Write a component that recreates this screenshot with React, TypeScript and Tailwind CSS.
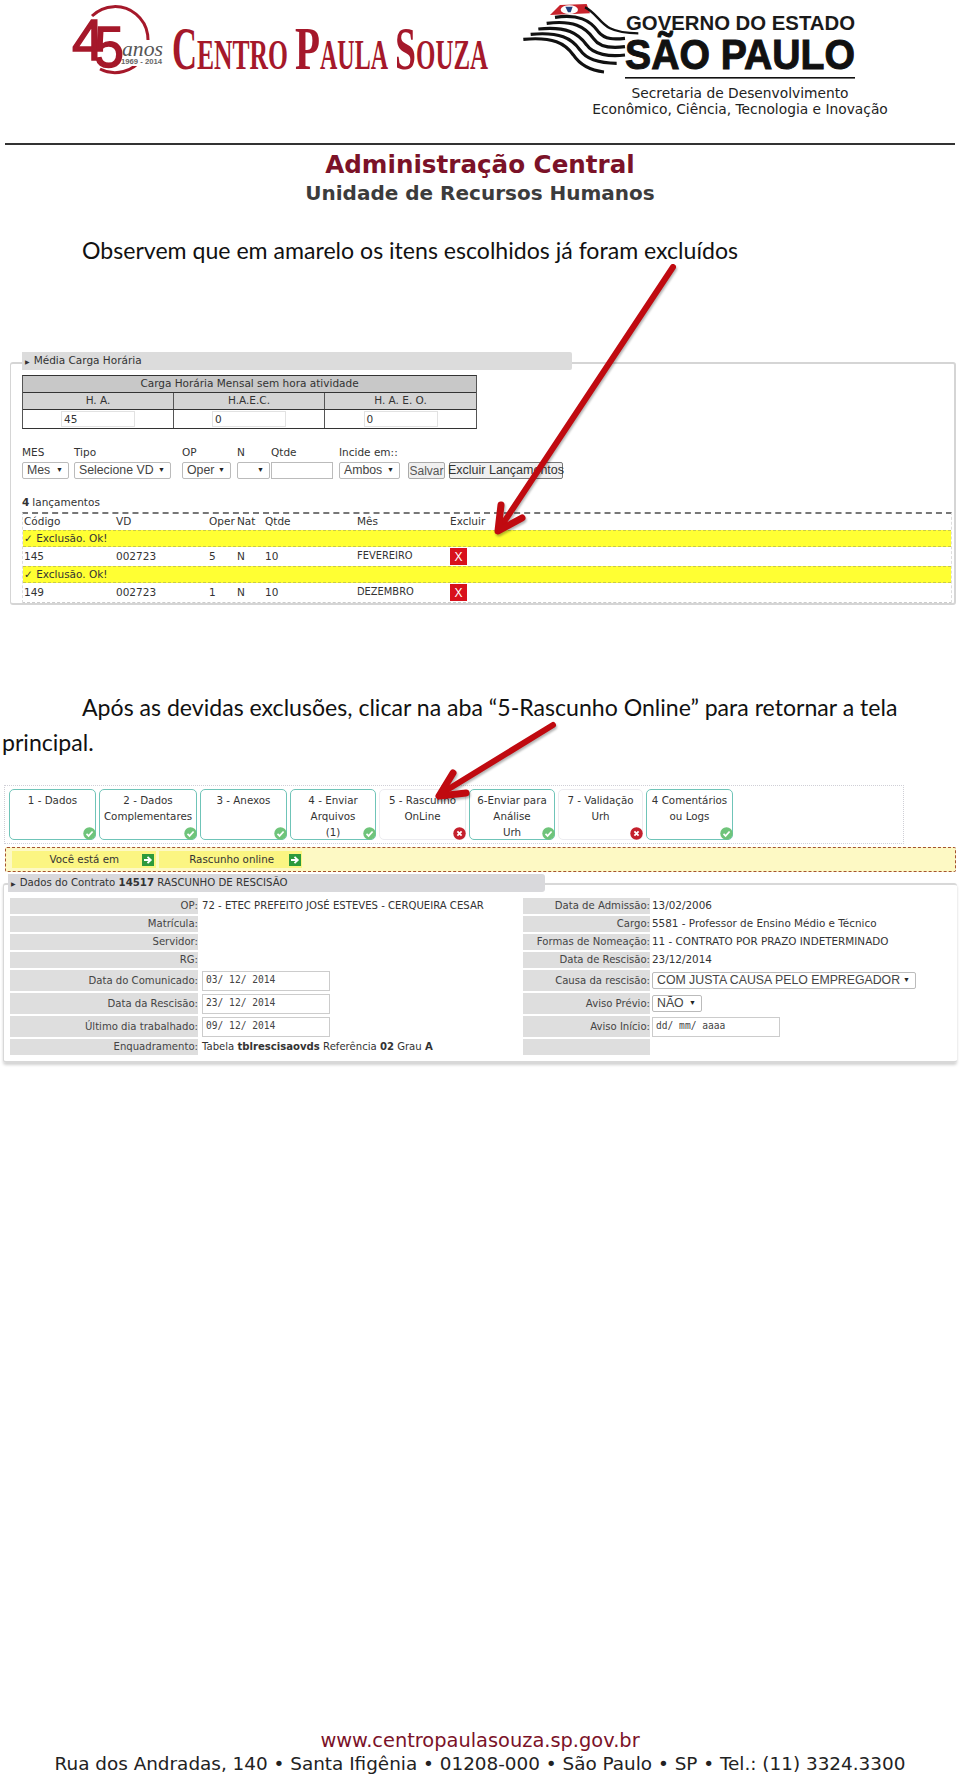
const TABS = [
  { w: "w-[87px]", lines: ["1 - Dados"], ok: true },
  { w: "w-[98px]", lines: ["2 - Dados", "Complementares"], ok: true },
  { w: "w-[87px]", lines: ["3 - Anexos"], ok: true },
  { w: "w-[86px]", lines: ["4 - Enviar", "Arquivos", "(1)"], ok: true },
  { w: "w-[87px]", lines: ["5 - Rascunho", "OnLine"], ok: false },
  { w: "w-[86px]", lines: ["6-Enviar para", "Análise", "Urh"], ok: true },
  { w: "w-[85px]", lines: ["7 - Validação", "Urh"], ok: false },
  { w: "w-[87px]", lines: ["4 Comentários", "ou Logs"], ok: true },
];

function StatusIcon({ ok }: { ok: boolean }) {
  return (
    <svg width="13" height="13" viewBox="0 0 13 13" className="absolute right-[-1px] bottom-[-1px]">
      <circle cx="6.5" cy="6.5" r="6.2" fill={ok ? "#6fc47a" : "#c4202c"} />
      {ok ? (
        <path d="M3.5 6.8l2.1 2.1 4-4.4" fill="none" stroke="#fff" strokeWidth="1.7" />
      ) : (
        <path d="M4.4 4.4l4.2 4.2M8.6 4.4l-4.2 4.2" fill="none" stroke="#fff" strokeWidth="1.8" />
      )}
    </svg>
  );
}

function GreenArrow() {
  return (
    <svg width="12" height="12" viewBox="0 0 12 12" className="shrink-0">
      <rect width="12" height="12" fill="#2c9a3c" />
      <path d="M2 6h6M5.5 2.8L8.8 6 5.5 9.2" fill="none" stroke="#fff" strokeWidth="1.8" />
    </svg>
  );
}

function FakeSelect({ className, label }: { className: string; label: string }) {
  return (
    <div className={`h-[17px] flex items-center justify-between pl-[4px] pr-[5px] bg-white border border-[#bbb] rounded-[2px] font-['Liberation_Sans',sans-serif] text-[12.3px] text-[#444] whitespace-nowrap ${className}`}>
      <span>{label}</span>
      <span className="text-[7px] text-[#222]">▼</span>
    </div>
  );
}

function LancamentoRow({ codigo, oper, mes }: { codigo: string; oper: string; mes: string }) {
  return (
    <>
      <div className="h-[17px] bg-[#ffff33] border-y border-dashed border-[#c9c94a] pl-[1px] flex items-center text-[#333]">✓ Exclusão. Ok!</div>
      <div className="h-[19px] flex items-center">
        <span className="w-[93px] pl-[1px]">{codigo}</span>
        <span className="w-[93px]">002723</span>
        <span className="w-[28px]">{oper}</span>
        <span className="w-[28px]">N</span>
        <span className="w-[92px]">10</span>
        <span className="w-[93px] text-[9.9px]">{mes}</span>
        <span className="w-[17px] h-[17px] bg-[#d8111c] text-white flex items-center justify-center font-['Liberation_Sans',sans-serif] text-[12px]">X</span>
      </div>
    </>
  );
}

function FirstShot() {
  return (
    <section className="mt-[87px] ml-[10px] w-[946px] h-[255px] font-['DejaVu_Sans',sans-serif] text-[10.5px] text-[#333]">
      <div className="relative z-10 ml-[12px] w-[550px] h-[18px] bg-[#dcdcdc] rounded-r-[2px] flex items-center gap-[4px] pl-[3px]">
        <span className="text-[6px]">▶</span>Média Carga Horária
      </div>
      <div className="-mt-[8px] h-[243px] bg-white border-t-2 border-r-2 border-b-2 border-l border-[#d5d5d5] rounded-[3px] pl-[11px] pt-[11px]">
        <div className="w-[455px] border-y border-[#333] border-x border-x-[#555] text-center text-[#333]">
          <div className="h-[17px] bg-[#c8c8c8] border-b border-[#333] flex items-center justify-center">Carga Horária Mensal sem hora atividade</div>
          <div className="h-[17px] grid grid-cols-3 bg-[#d4d4d4] border-b border-[#333]">
            <div className="flex items-center justify-center border-r border-[#555]">H. A.</div>
            <div className="flex items-center justify-center border-r border-[#555]">H.A.E.C.</div>
            <div className="flex items-center justify-center">H. A. E. O.</div>
          </div>
          <div className="h-[18px] grid grid-cols-3 text-left">
            {["45", "0", "0"].map((v, i) => (
              <div key={i} className={`flex items-center justify-center ${i < 2 ? "border-r border-[#555]" : ""}`}>
                <div className="w-[74px] h-[16px] border border-[#e2e2e2] pl-[2px] leading-[15px]">{v}</div>
              </div>
            ))}
          </div>
        </div>

        <div className="mt-[17px] flex h-[14px] items-center">
          <span className="w-[52px]">MES</span>
          <span className="w-[108px]">Tipo</span>
          <span className="w-[55px]">OP</span>
          <span className="w-[34px]">N</span>
          <span className="w-[68px]">Qtde</span>
          <span>Incide em::</span>
        </div>
        <div className="mt-[2px] flex">
          <FakeSelect className="w-[47px]" label="Mes" />
          <FakeSelect className="w-[97px] ml-[5px]" label="Selecione VD" />
          <FakeSelect className="w-[49px] ml-[11px]" label="Oper" />
          <FakeSelect className="w-[33px] ml-[6px]" label="" />
          <div className="w-[62px] h-[17px] ml-[1px] bg-white border border-[#bbb]" />
          <FakeSelect className="w-[61px] ml-[6px]" label="Ambos" />
          <div className="w-[37px] h-[17px] ml-[8px] bg-[#f0f0f0] border border-[#aaa] rounded-[2px] flex items-center justify-center font-['Liberation_Sans',sans-serif] text-[12px] text-[#555]">Salvar</div>
          <div className="w-[114px] h-[17px] ml-[4px] bg-[#f0f0f0] border border-[#777] rounded-[2px] flex items-center justify-center font-['Liberation_Sans',sans-serif] text-[12.5px] text-[#333] whitespace-nowrap">Excluir Lançamentos</div>
        </div>

        <div className="mt-[16px] h-[16px] flex items-center"><b className="mr-[3px]">4</b>lançamentos</div>
        <div className="mt-[1px] w-[930px] h-[91px] border-t-2 border-dashed border-[#777] border-x border-x-[#ddd] border-b border-b-[#ccc]">
          <div className="h-[16px] flex items-center">
            <span className="w-[93px] pl-[1px]">Código</span>
            <span className="w-[93px]">VD</span>
            <span className="w-[28px]">Oper</span>
            <span className="w-[28px]">Nat</span>
            <span className="w-[92px]">Qtde</span>
            <span className="w-[93px]">Mês</span>
            <span>Excluir</span>
          </div>
          <LancamentoRow codigo="145" oper="5" mes="FEVEREIRO" />
          <LancamentoRow codigo="149" oper="1" mes="DEZEMBRO" />
        </div>
      </div>
    </section>
  );
}

const TOP_ROWS = [
  ["OP:", "72 - ETEC PREFEITO JOSÉ ESTEVES - CERQUEIRA CESAR", "Data de Admissão:", "13/02/2006"],
  ["Matrícula:", "", "Cargo:", "5581 - Professor de Ensino Médio e Técnico"],
  ["Servidor:", "", "Formas de Nomeação:", "11 - CONTRATO POR PRAZO INDETERMINADO"],
  ["RG:", "", "Data de Rescisão:", "23/12/2014"],
];

function DateInput({ value, className }: { value: string; className: string }) {
  return (
    <div className={`h-[20px] bg-white border border-[#ccc] flex items-center pl-[3px] font-['DejaVu_Sans_Mono',monospace] text-[9.6px] whitespace-pre text-[#444] ${className}`}>
      {value}
    </div>
  );
}

function Label({ children }: { children?: React.ReactNode }) {
  return <div className="bg-[#dedede] flex items-center justify-end text-[#444]">{children}</div>;
}

function LeftValue({ children }: { children?: React.ReactNode }) {
  return <div className="flex items-center pl-[4px] text-[#333] whitespace-nowrap">{children}</div>;
}

function RightValue({ children }: { children?: React.ReactNode }) {
  return <div className="flex items-center pl-[2px] text-[10.4px] text-[#333] whitespace-nowrap">{children}</div>;
}

function SecondShot() {
  return (
    <section className="mt-[25px] font-['DejaVu_Sans',sans-serif] text-[10.1px] text-[#333]">
      <div className="ml-[4px] w-[900px] h-[59px] border border-dotted border-[#cfcfd6] pl-[4px] pt-[3px] flex gap-[3px] text-[10.3px]">
        {TABS.map((t) => (
          <div
            key={t.lines[0]}
            className={`relative ${t.w} h-[51px] rounded-[5px] border text-center leading-[16px] pt-[2px] ${t.ok ? "border-[#6fc4b8]" : "border-[#ececf0]"}`}
          >
            {t.lines.map((l) => (
              <div key={l} className="whitespace-nowrap">{l}</div>
            ))}
            <StatusIcon ok={t.ok} />
          </div>
        ))}
      </div>

      <div className="mt-[3px] ml-[5px] w-[951px] h-[25px] bg-[#fdf9c4] border border-dashed border-[#a5522f] rounded-[2px] flex items-center gap-[3px] pl-[6px] text-[10.3px]">
        <div className="w-[144px] h-[17px] bg-[#fbf582] flex items-center justify-end gap-[23px] pr-[2px]">Você está em<GreenArrow /></div>
        <div className="w-[143px] h-[17px] bg-[#fbf582] flex items-center justify-end gap-[15px] pr-[1px]">Rascunho online<GreenArrow /></div>
      </div>

      <div className="relative z-10 mt-[2px] ml-[8px] w-[537px] h-[18px] bg-[#d9d9dc] rounded-r-[3px] flex items-center gap-[4px] pl-[3px] text-[10.2px]">
        <span className="text-[6px]">▶</span>
        <span>Dados do Contrato <b>14517</b> RASCUNHO DE RESCISÃO</span>
      </div>
      <div className="-mt-[9px] ml-[3px] w-[954px] h-[180px] border-t-2 border-b-2 border-l border-[#d8d8d8] rounded-[3px] pl-[6px] pt-[13px] shadow-[0_2px_3px_rgba(0,0,0,0.18)]">
        <div className="grid grid-cols-[188px_325px_127px_1fr] grid-rows-[16px_16px_16px_16px_21px_21px_21px_16px] gap-y-[2px]">
          {TOP_ROWS.map((r) => [
            <Label key={r[0]}>{r[0]}</Label>,
            <LeftValue key={`${r[0]}-v`}>{r[1]}</LeftValue>,
            <Label key={r[2]}>{r[2]}</Label>,
            <RightValue key={`${r[2]}-v`}>{r[3]}</RightValue>,
          ])}

          <Label>Data do Comunicado:</Label>
          <LeftValue><DateInput className="w-[128px]" value="03/ 12/ 2014" /></LeftValue>
          <Label>Causa da rescisão:</Label>
          <RightValue><FakeSelect className="w-[264px]" label="COM JUSTA CAUSA PELO EMPREGADOR" /></RightValue>

          <Label>Data da Rescisão:</Label>
          <LeftValue><DateInput className="w-[128px]" value="23/ 12/ 2014" /></LeftValue>
          <Label>Aviso Prévio:</Label>
          <RightValue><FakeSelect className="w-[50px]" label="NÃO" /></RightValue>

          <Label>Último dia trabalhado:</Label>
          <LeftValue><DateInput className="w-[128px]" value="09/ 12/ 2014" /></LeftValue>
          <Label>Aviso Início:</Label>
          <RightValue><DateInput className="w-[128px]" value="dd/ mm/ aaaa" /></RightValue>

          <Label>Enquadramento:</Label>
          <LeftValue><span>Tabela <b>tblrescisaovds</b> Referência <b>02</b> Grau <b>A</b></span></LeftValue>
          <Label />
          <RightValue />
        </div>
      </div>
    </section>
  );
}

function CpsLogo() {
  const big = { fontFamily: "Liberation Serif", fontWeight: 700, fontSize: 62, fill: "#a5182a", lengthAdjust: "spacingAndGlyphs" as const };
  const small = { ...big, fontSize: 42 };
  return (
    <svg width="430" height="80" viewBox="70 0 430 80" className="block shrink-0">
      <path d="M92 16A33 33 0 1 1 100 69" fill="none" stroke="#a5182a" strokeWidth="3" />
      <rect x="120" y="40" width="44" height="26" fill="#fff" />
      <text x="72" y="60" fontFamily="Liberation Sans" fontSize="58" fill="#a5182a" stroke="#a5182a" strokeWidth="1.5" textLength="32" lengthAdjust="spacingAndGlyphs">4</text>
      <text x="94" y="67" fontFamily="Liberation Sans" fontSize="58" fill="#a5182a" stroke="#a5182a" strokeWidth="1.5" textLength="30" lengthAdjust="spacingAndGlyphs">5</text>
      <text x="122" y="56" fontFamily="Liberation Serif" fontStyle="italic" fontSize="22" fill="#555" textLength="41" lengthAdjust="spacingAndGlyphs">anos</text>
      <text x="121" y="64" fontFamily="Liberation Sans" fontWeight="700" fontSize="7" fill="#666" textLength="41" lengthAdjust="spacingAndGlyphs">1969 - 2014</text>
      <text x="172" y="69" textLength="25" {...big}>C</text>
      <text x="197" y="69" textLength="91" {...small}>ENTRO</text>
      <text x="295" y="69" textLength="25" {...big}>P</text>
      <text x="320" y="69" textLength="68" {...small}>AULA</text>
      <text x="395" y="69" textLength="21" {...big}>S</text>
      <text x="416" y="69" textLength="72" {...small}>OUZA</text>
    </svg>
  );
}

function SpLogo() {
  // stripes traced in 3x crop coordinates, scaled down by the group transform
  const stripes = [
    "M135 52C205 42 240 60 265 95C285 120 315 118 345 115",
    "M110 70C190 60 225 80 250 115C270 145 310 145 345 140",
    "M85 87C170 78 205 100 230 135C250 165 300 170 345 165",
    "M62 103C150 95 185 115 210 150C230 180 270 190 320 190",
    "M40 118C130 110 165 130 190 165C210 195 245 212 282 216",
  ];
  return (
    <svg width="370" height="84" viewBox="523 0 370 84" className="block">
      <g transform="translate(510 0) scale(0.3333)">
        <path d="M120 45L150 15L230 12L240 40Z" fill="#c8232c" />
        <ellipse cx="178" cy="29" rx="26" ry="13" fill="#fff" />
        <path d="M166 20h22l-6 17h-8z" fill="#23407f" />
        <path d="M225 22C255 35 270 70 300 85C320 95 350 100 385 100" fill="none" stroke="#111" strokeWidth="7" />
        {stripes.map((d) => (
          <path key={d} d={d} fill="none" stroke="#111" strokeWidth="9.5" />
        ))}
      </g>
      <text x="626" y="30" fontFamily="Liberation Sans" fontWeight="700" fontSize="20" fill="#1a1a1a" textLength="229" lengthAdjust="spacingAndGlyphs">GOVERNO DO ESTADO</text>
      <text x="625" y="69" fontFamily="Liberation Sans" fontWeight="700" fontSize="42" fill="#111" stroke="#111" strokeWidth="1" textLength="230" lengthAdjust="spacingAndGlyphs">SÃO PAULO</text>
      <rect x="625" y="77" width="230" height="1.6" fill="#111" />
    </svg>
  );
}

export default function App() {
  return (
    <div className="relative w-[960px] h-[1776px] bg-white flex flex-col overflow-hidden">
      {/* Logos */}
      <header className="h-[143px] flex">
        <div className="ml-[70px] w-[453px]"><CpsLogo /></div>
        <div className="w-[434px]">
          <SpLogo />
          <div className="mt-[1px] text-center font-['DejaVu_Sans',sans-serif] text-[13.8px] leading-[16px] text-[#222]">
            <div>Secretaria de Desenvolvimento</div>
            <div>Econômico, Ciência, Tecnologia e Inovação</div>
          </div>
        </div>
      </header>
      <div className="ml-[5px] w-[950px] h-[2px] bg-[#333]" />

      <div className="mt-[5px] text-center font-['DejaVu_Sans',sans-serif] font-bold">
        <h1 className="text-[24.6px] leading-[30px] text-[#7b1228]">Administração Central</h1>
        <h2 className="text-[20px] leading-[26px] text-[#3c3c3c]">Unidade de Recursos Humanos</h2>
      </div>

      <p className="mt-[29px] ml-[82px] font-['Lato',sans-serif] text-[23.1px] leading-[30px] text-[#111]">
        Observem que em amarelo os itens escolhidos já foram excluídos
      </p>

      <FirstShot />

      <p className="mt-[83px] ml-[2px] w-[930px] indent-[80px] font-['Lato',sans-serif] text-[23.1px] leading-[35px] text-[#111]">
        Após as devidas exclusões, clicar na aba “5-Rascunho Online” para retornar a tela principal.
      </p>

      <SecondShot />

      <footer className="mt-auto text-center font-['DejaVu_Sans',sans-serif]">
        <div className="text-[19.4px] leading-[22px] text-[#7b1228]">www.centropaulasouza.sp.gov.br</div>
        <div className="text-[18.4px] leading-[24px] text-[#222]">Rua dos Andradas, 140 • Santa Ifigênia • 01208-000 • São Paulo • SP • Tel.: (11) 3324.3300</div>
      </footer>

      {/* Red annotation arrows */}
      <svg width="960" height="1776" viewBox="0 0 960 1776" className="absolute inset-0 pointer-events-none">
        <g fill="none" stroke="#c00a10" strokeLinecap="round" strokeLinejoin="round" style={{ filter: "drop-shadow(1px 2px 1px rgba(0,0,0,0.3))" }}>
          <path d="M673 267L500 528" strokeWidth="6" />
          <path d="M501 505L498 531L522 518" strokeWidth="7" />
          <path d="M553 725L442 793" strokeWidth="6" />
          <path d="M453 773L439 796L466 793" strokeWidth="7" />
        </g>
      </svg>
    </div>
  );
}
